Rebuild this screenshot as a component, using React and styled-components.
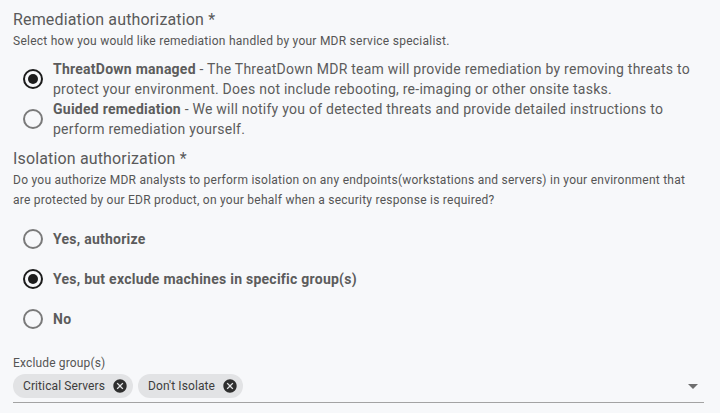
import React, { useState } from "react";
import styled, { createGlobalStyle } from "styled-components";

const GlobalStyle = createGlobalStyle`
  html, body {
    margin: 0;
    padding: 0;
    background: #f7f8fa;
  }
  body {
    font-family: Roboto, "Noto Sans", "Liberation Sans", sans-serif;
    color: #5c5c5c;
    -webkit-font-smoothing: antialiased;
  }
`;

const Page = styled.div`
  width: 720px;
  height: 413px;
  overflow: hidden;
  box-sizing: border-box;
  padding: 0 16px 0 13px;
  display: flex;
  flex-direction: column;
`;

const Section = styled.section`
  display: flex;
  flex-direction: column;
  padding-top: 9px;
`;

const Title = styled.h2`
  margin: 0;
  font-size: 16px;
  line-height: 22px;
  font-weight: 400;
  letter-spacing: 0.15px;
  color: #5a5a5a;
`;

const Hint = styled.p`
  margin: 0;
  font-size: 12px;
  line-height: 20px;
  letter-spacing: 0.25px;
  color: #555;
`;

const OptionList = styled.div`
  display: flex;
  flex-direction: column;
  margin-top: ${(p) => p.$gap}px;
`;

const OptionRow = styled.label`
  display: flex;
  align-items: center;
  gap: 8px;
  padding-left: 8px;
  min-height: ${(p) => p.$height}px;
  cursor: pointer;
`;

const OptionText = styled.span`
  font-size: 14px;
  line-height: 20px;
  letter-spacing: 0.25px;
  color: #5c5c5c;
  font-weight: ${(p) => (p.$bold ? 700 : 400)};
`;

const Strong = styled.b`
  font-weight: 700;
`;

const RadioBox = styled.span`
  flex: none;
  width: 24px;
  height: 24px;
  display: flex;
  align-items: center;
  justify-content: center;
`;

function Radio({ checked }) {
  return (
    <RadioBox>
      <svg width="24" height="24" viewBox="0 0 24 24">
        <circle
          cx="12"
          cy="12"
          r="9"
          fill="none"
          stroke={checked ? "#1c1c1c" : "#7a7a7a"}
          strokeWidth="2"
        />
        {checked && <circle cx="12" cy="12" r="5" fill="#1c1c1c" />}
      </svg>
    </RadioBox>
  );
}

const Field = styled.div`
  display: flex;
  flex-direction: column;
  margin-top: 16px;
`;

const FieldLabel = styled.span`
  font-size: 12px;
  line-height: 16px;
  letter-spacing: 0.15px;
  color: #555;
`;

const SelectBox = styled.div`
  display: flex;
  align-items: center;
  gap: 5px;
  margin-top: 3px;
  padding-bottom: 4px;
  border-bottom: 1px solid #a3a3a3;
`;

const Chip = styled.span`
  display: inline-flex;
  align-items: center;
  gap: 7px;
  height: 24px;
  padding: 0 5px 0 10px;
  border-radius: 12px;
  background: #e2e3e5;
  font-size: 12px;
  letter-spacing: 0.1px;
  color: #3d3d3d;
`;

const DeleteIcon = styled.svg`
  flex: none;
  display: block;
`;

const Arrow = styled.span`
  margin-left: auto;
  margin-right: 6px;
  width: 0;
  height: 0;
  border-left: 5px solid transparent;
  border-right: 5px solid transparent;
  border-top: 5px solid #6e6e6e;
`;

function GroupChip({ label }) {
  return (
    <Chip>
      {label}
      <DeleteIcon width="16" height="16" viewBox="0 0 24 24">
        <path
          fill="#2e2e2e"
          d="M12 2C6.47 2 2 6.47 2 12s4.47 10 10 10 10-4.47 10-10S17.53 2 12 2zm5 13.59L15.59 17 12 13.41 8.41 17 7 15.59 10.59 12 7 8.41 8.41 7 12 10.59 15.59 7 17 8.41 13.41 12 17 15.59z"
        />
      </DeleteIcon>
    </Chip>
  );
}

const remediationOptions = [
  {
    id: "managed",
    name: "ThreatDown managed",
    text: " - The ThreatDown MDR team will provide remediation by removing threats to protect your environment. Does not include rebooting, re-imaging or other onsite tasks.",
  },
  {
    id: "guided",
    name: "Guided remediation",
    text: " - We will notify you of detected threats and provide detailed instructions to perform remediation yourself.",
  },
];

const isolationOptions = [
  { id: "yes", label: "Yes, authorize" },
  { id: "exclude", label: "Yes, but exclude machines in specific group(s)" },
  { id: "no", label: "No" },
];

export default function App() {
  const [remediation] = useState("managed");
  const [isolation] = useState("exclude");

  return (
    <>
      <GlobalStyle />
      <Page>
        <Section>
          <Title>Remediation authorization *</Title>
          <Hint>Select how you would like remediation handled by your MDR service specialist.</Hint>
          <OptionList $gap={8}>
            {remediationOptions.map((o) => (
              <OptionRow key={o.id} $height={40}>
                <Radio checked={remediation === o.id} />
                <OptionText>
                  <Strong>{o.name}</Strong>
                  {o.text}
                </OptionText>
              </OptionRow>
            ))}
          </OptionList>
        </Section>

        <Section>
          <Title>Isolation authorization *</Title>
          <Hint>
            Do you authorize MDR analysts to perform isolation on any endpoints(workstations and servers) in your
            environment that are protected by our EDR product, on your behalf when a security response is required?
          </Hint>
          <OptionList $gap={9}>
            {isolationOptions.map((o) => (
              <OptionRow key={o.id} $height={40}>
                <Radio checked={isolation === o.id} />
                <OptionText $bold>{o.label}</OptionText>
              </OptionRow>
            ))}
          </OptionList>
        </Section>

        <Field>
          <FieldLabel>Exclude group(s)</FieldLabel>
          <SelectBox>
            <GroupChip label="Critical Servers" />
            <GroupChip label="Don't Isolate" />
            <Arrow />
          </SelectBox>
        </Field>
      </Page>
    </>
  );
}
